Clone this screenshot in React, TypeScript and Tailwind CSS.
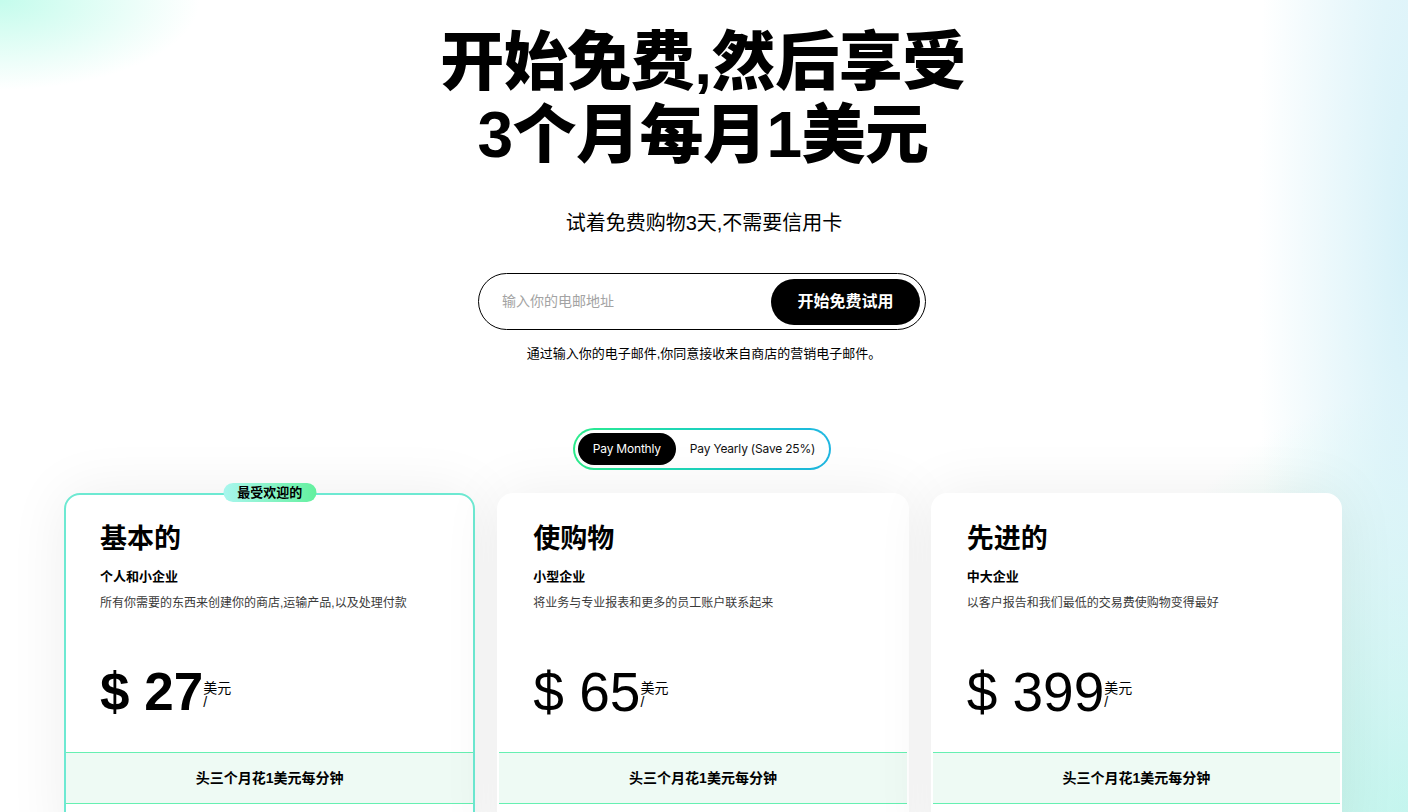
import React from 'react';

const plans = [
  {
    name: '基本的',
    audience: '个人和小企业',
    desc: '所有你需要的东西来创建你的商店,运输产品,以及处理付款',
    price: '27',
    popular: true,
  },
  {
    name: '使购物',
    audience: '小型企业',
    desc: '将业务与专业报表和更多的员工账户联系起来',
    price: '65',
    popular: false,
  },
  {
    name: '先进的',
    audience: '中大企业',
    desc: '以客户报告和我们最低的交易费使购物变得最好',
    price: '399',
    popular: false,
  },
];

function PlanCard({ plan }: { plan: (typeof plans)[number] }) {
  return (
    <div
      className={
        'relative bg-white rounded-[16px] border-2 h-[360px] shadow-[0_0_60px_rgba(0,0,0,0.07)] ' +
        (plan.popular ? 'border-[#6de9d2]' : 'border-transparent')
      }
    >
      {plan.popular && (
        <div className="absolute left-1/2 -translate-x-1/2 -top-[12px] h-[19px] px-[14px] rounded-full bg-gradient-to-r from-[#a8f6ee] to-[#62f09e] flex items-center text-[13px] font-bold text-black">
          最受欢迎的
        </div>
      )}
      <div className="pl-[34px] pr-6 pt-[28px]">
        <h2 className="text-[27px] leading-[32px] font-bold text-black">{plan.name}</h2>
        <div className="mt-[14px] text-[13px] leading-[16px] font-bold text-black">{plan.audience}</div>
        <p className="mt-[10px] text-[12px] leading-[16px] text-[#3a3a3a]">{plan.desc}</p>
        <div className="mt-[53px] flex items-start">
          <span
            className={
              "leading-[56px] text-black font-['Liberation_Sans',sans-serif] " +
              (plan.popular ? 'text-[53px] font-bold' : 'text-[55px] font-normal')
            }
          >
            $ {plan.price}
          </span>
          <div className="mt-[17px] flex flex-col text-[14px] leading-[14px] text-black">
            <span>美元</span>
            <span>/</span>
          </div>
        </div>
      </div>
      <div className="mt-[32px] h-[52px] border-y border-[#66f0b2] bg-[#eefaf4] flex items-center justify-center text-[14px] font-bold text-black">
        头三个月花1美元每分钟
      </div>
    </div>
  );
}

export default function App() {
  return (
    <div className="relative h-screen overflow-hidden bg-white font-['Liberation_Sans','Noto_Sans_CJK_SC',sans-serif] text-black bg-[radial-gradient(200px_90px_at_0%_0%,#c4fcec_0%,rgba(255,255,255,0)_100%),radial-gradient(150px_1000px_at_100%_30%,#d6f1f8_0%,rgba(255,255,255,0)_100%),radial-gradient(320px_420px_at_100%_100%,#b6f8e6_0%,rgba(255,255,255,0)_100%)]">
      <div className="flex flex-col items-center pt-[26px]">
        <h1 className="text-[64px] leading-[73px] font-black text-center tracking-[-0.5px] -translate-x-[1px]">
          开始免费,然后享受
          <br />
          3个月每月1美元
        </h1>
        <p className="mt-[37px] text-[20px] leading-[28px]">试着免费购物3天,不需要信用卡</p>

        <form className="mt-[36px] w-[448px] h-[57px] rounded-full border border-black flex items-center justify-between pl-[23px] pr-[5px] -translate-x-[2px]">
          <input
            className="flex-1 outline-none bg-transparent text-[14px] placeholder:text-[#a3a3a3]"
            placeholder="输入你的电邮地址"
          />
          <button
            type="button"
            className="w-[149px] h-[46px] rounded-full bg-black text-white text-[16px] font-bold"
          >
            开始免费试用
          </button>
        </form>
        <p className="mt-[16px] text-[13px] leading-[16px]">通过输入你的电子邮件,你同意接收来自商店的营销电子邮件。</p>

        <div className="mt-[66px] rounded-full p-[2px] bg-gradient-to-r from-[#2cec8c] to-[#1fb6e2] -translate-x-[2px]">
          <div className="flex items-center rounded-full bg-white p-[3px] font-['Inter',sans-serif] text-[12px] tracking-[-0.2px]">
            <button type="button" className="h-[32px] w-[98px] rounded-full bg-black text-white">
              Pay Monthly
            </button>
            <button type="button" className="h-[32px] pl-[14px] pr-[11px] text-[#111]">
              Pay Yearly (Save 25%)
            </button>
          </div>
        </div>

        <div className="mt-[23px] w-[1278px] grid grid-cols-3 gap-[22px] -translate-x-[1px]">
          {plans.map((p) => (
            <PlanCard key={p.name} plan={p} />
          ))}
        </div>
      </div>
    </div>
  );
}
